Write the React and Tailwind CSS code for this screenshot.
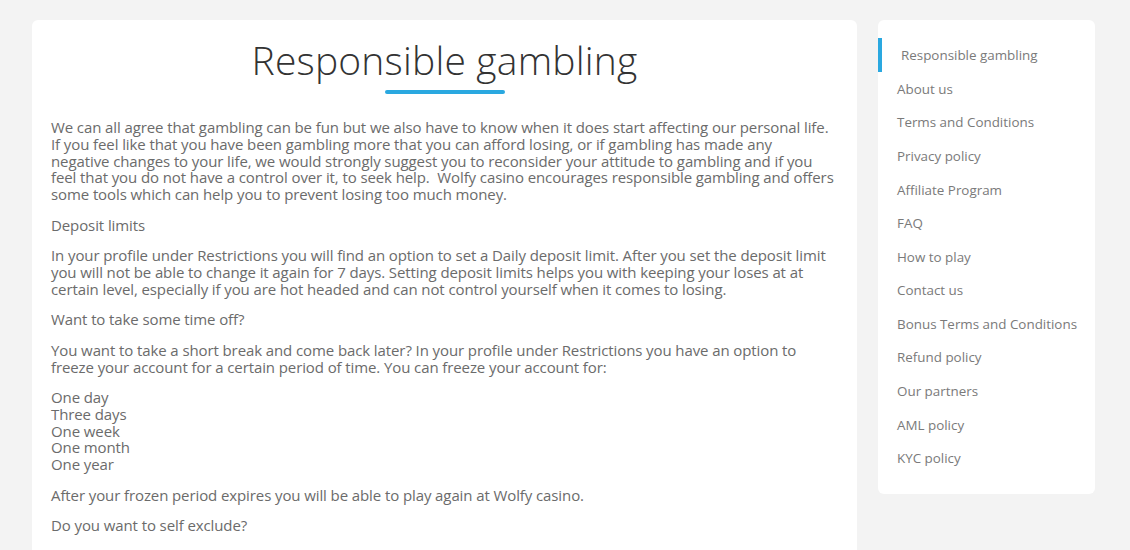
import React from "react";

const links = [
  "About us",
  "Terms and Conditions",
  "Privacy policy",
  "Affiliate Program",
  "FAQ",
  "How to play",
  "Contact us",
  "Bonus Terms and Conditions",
  "Refund policy",
  "Our partners",
  "AML policy",
  "KYC policy",
];

export default function App() {
  return (
    <div
      className="min-h-screen bg-[#f3f3f3] flex items-start gap-[21px] pl-[32px] pt-[20px] overflow-hidden h-[550px]"
      style={{ fontFamily: '"Open Sans", "Liberation Sans", sans-serif' }}
    >
      <main className="w-[825px] shrink-0 bg-white rounded-[6px] px-[19px] pt-[16px] pb-10 text-[#6b6b6b]">
        <h1 className="text-center text-[39px] leading-[48px] font-light text-[#333] tracking-[0.2px]">
          Responsible gambling
        </h1>
        <div className="mx-auto mt-[6px] w-[120px] h-[4px] rounded-full bg-[#2aa8e0]" />
        <div className="mt-[25px] text-[15px] leading-[16.8px] tracking-[-0.1px]">
          <p className="mb-[13.7px]">
            We can all agree that gambling can be fun but we also have to know when it does start affecting our personal life.
            <br />
            If you feel like that you have been gambling more that you can afford losing, or if gambling has made any
            <br />
            negative changes to your life, we would strongly suggest you to reconsider your attitude to gambling and if you
            <br />
            feel that you do not have a control over it, to seek help.&nbsp; Wolfy casino encourages responsible gambling and offers
            <br />
            some tools which can help you to prevent losing too much money.
          </p>
          <p className="mb-[13.7px]">Deposit limits</p>
          <p className="mb-[13.7px]">
            In your profile under Restrictions you will find an option to set a Daily deposit limit. After you set the deposit limit you will not be able to change it again for 7 days. Setting deposit limits helps you with keeping your loses at at certain level, especially if you are hot headed and can not control yourself when it comes to losing.
          </p>
          <p className="mb-[13.7px]">Want to take some time off?</p>
          <p className="mb-[13.7px]">
            You want to take a short break and come back later? In your profile under Restrictions you have an option to freeze your account for a certain period of time. You can freeze your account for:
          </p>
          <p className="mb-[13.7px]">
            One day
            <br />
            Three days
            <br />
            One week
            <br />
            One month
            <br />
            One year
          </p>
          <p className="mb-[13.7px]">After your frozen period expires you will be able to play again at Wolfy casino.</p>
          <p className="mb-[13.7px]">Do you want to self exclude?</p>
        </div>
      </main>
      <aside className="w-[217px] shrink-0 bg-white rounded-[6px] pt-[18px] pb-[19px] text-[13.4px] text-[#7a7a7a]">
        <div className="flex items-center h-[34px] border-l-[4px] border-[#2aa8e0] pl-[19px]">
          Responsible gambling
        </div>
        {links.map((l) => (
          <div key={l} className="flex items-center h-[33.6px] pl-[19px]">
            {l}
          </div>
        ))}
      </aside>
    </div>
  );
}
